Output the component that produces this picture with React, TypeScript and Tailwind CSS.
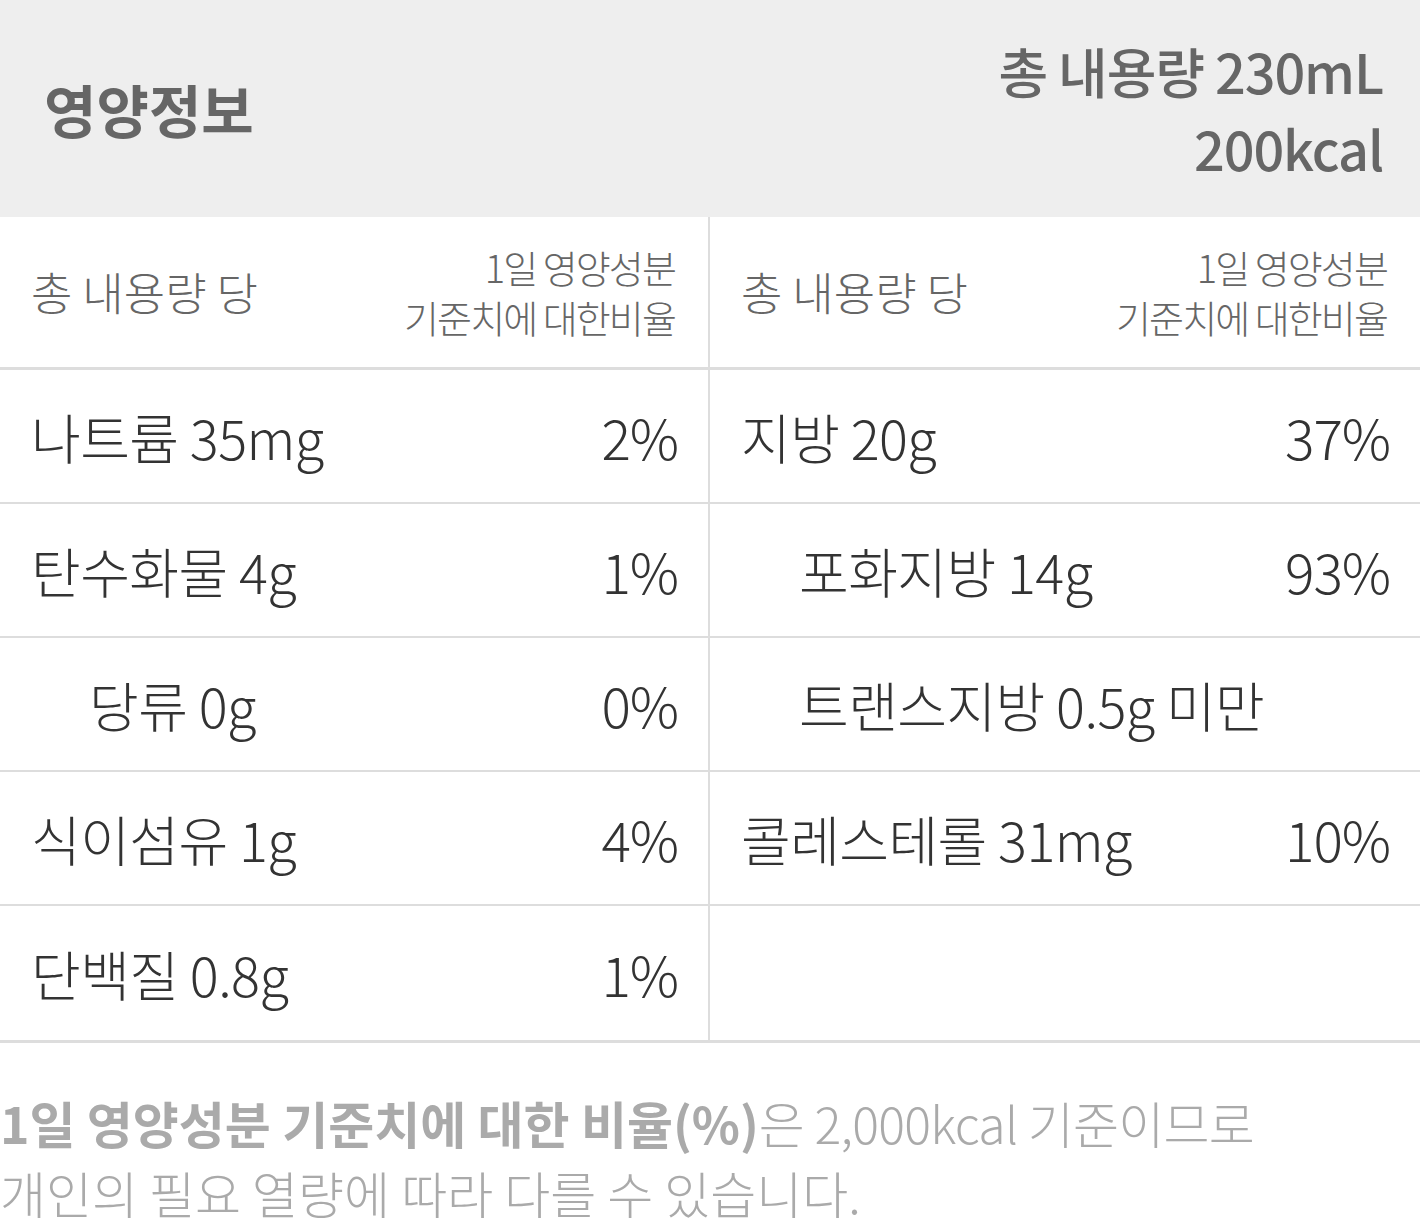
const FONT = "font-['Noto_Sans_CJK_KR','Noto_Sans',sans-serif]";

type Row = {
  name: string;
  value?: string;
  indent?: boolean;
};

const LEFT: Row[] = [
  { name: "나트륨 35mg", value: "2%" },
  { name: "탄수화물 4g", value: "1%" },
  { name: "당류 0g", value: "0%", indent: true },
  { name: "식이섬유 1g", value: "4%" },
  { name: "단백질 0.8g", value: "1%" },
];

const RIGHT: Row[] = [
  { name: "지방 20g", value: "37%" },
  { name: "포화지방 14g", value: "93%", indent: true },
  { name: "트랜스지방 0.5g 미만", indent: true },
  { name: "콜레스테롤 31mg", value: "10%" },
  { name: "" },
];

function ColumnHead() {
  return (
    <div className="flex h-[153px] items-center justify-between border-b-[3px] border-[#dddddd] pl-[31px] pr-[33px]">
      <span className="text-[45px] font-light text-[#666666]">
        총 내용량 당
      </span>
      <span className="text-right text-[38px] leading-[50px] font-light tracking-[-0.05em] text-[#666666]">
        1일 영양성분
        <br />
        기준치에 대한비율
      </span>
    </div>
  );
}

function NutrientRow({ row }: { row: Row }) {
  return (
    <div className="flex h-[134px] items-center justify-between border-b-2 border-[#dddddd] pl-[31px] pr-[30px] last:border-b-0">
      <span
        className={`text-[54px] font-light tracking-[-0.01em] text-[#333333] ${
          row.indent ? "pl-[58px]" : ""
        }`}
      >
        {row.name}
      </span>
      {row.value && (
        <span className="text-[55px] font-light tracking-[-0.02em] text-[#333333]">
          {row.value}
        </span>
      )}
    </div>
  );
}

export default function App() {
  return (
    <div className={`w-[1420px] bg-white ${FONT}`}>
      {/* header */}
      <div className="flex h-[217px] items-center justify-between bg-[#eeeeee] pl-[44px] pr-[37px]">
        <h1 className="text-[57px] font-bold text-[#666666]">영양정보</h1>
        <div className="text-right text-[54px] leading-[77px] font-medium tracking-[-0.02em] text-[#666666]">
          총 내용량 230mL
          <br />
          200kcal
        </div>
      </div>

      {/* table */}
      <div className="grid grid-cols-2 border-b-[3px] border-[#dddddd]">
        <div className="border-r-2 border-[#dddddd]">
          <ColumnHead />
          {LEFT.map((r) => (
            <NutrientRow key={r.name} row={r} />
          ))}
        </div>
        <div>
          <ColumnHead />
          {RIGHT.map((r, i) => (
            <NutrientRow key={i} row={r} />
          ))}
        </div>
      </div>

      {/* footnote */}
      <p className="pt-[44px] text-[50px] leading-[70px] font-light text-[#aaaaaa]">
        <span className="font-bold">1일 영양성분 기준치에 대한 비율(%)</span>
        <span className="tracking-[-0.015em]">은 2,000kcal 기준이므로</span>
        <br />
        개인의 필요 열량에 따라 다를 수 있습니다.
      </p>
    </div>
  );
}
